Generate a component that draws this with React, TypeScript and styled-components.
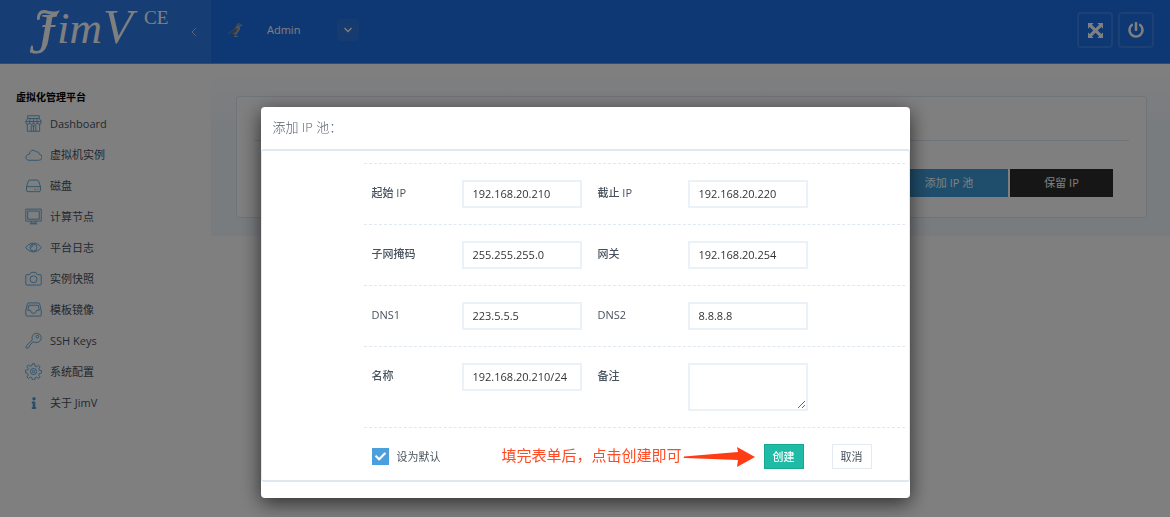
import React from "react";
import styled, { createGlobalStyle } from "styled-components";
import { FaCheck, FaInfo, FaPowerOff } from "react-icons/fa";

const GlobalStyle = createGlobalStyle`
  * { box-sizing: border-box; }
  body {
    margin: 0;
    background: #fff;
    color: #48525e;
    font: 11px/16px "Open Sans", "Noto Sans CJK SC", sans-serif;
  }
  button, input, textarea { font: inherit; }
`;

const Page = styled.div`
  min-height: 100vh;
`;

const Header = styled.header`
  display: flex;
  height: 64px;
  background: #1c70e6;
  border-bottom: 1px solid #6f96dc;
`;

const Brand = styled.div`
  display: flex;
  align-items: center;
  justify-content: space-between;
  width: 211px;
  padding-right: 14px;
  background: #2f7de8;
  color: #fff;
`;

const Logo = styled.svg`
  overflow: visible;
  fill: #fff;
  font-family: "Liberation Serif", serif;
  font-style: italic;
`;

const UserBar = styled.div`
  display: flex;
  flex: 1;
  align-items: center;
  padding: 0 16px 3px;
  color: #fff;
`;

const UserName = styled.span`
  width: 70px;
  margin-left: 24px;
`;

const MenuButton = styled.button`
  display: grid;
  place-items: center;
  width: 22px;
  height: 22px;
  padding: 0;
  border: 0;
  border-radius: 3px;
  background: #2b76e2;
  color: #fff;
`;

const Tools = styled.div`
  display: flex;
  gap: 5px;
  margin-left: auto;
`;

const ToolButton = styled.button`
  display: grid;
  place-items: center;
  width: 36px;
  height: 36px;
  padding: 0;
  border: 2px solid #3a80ea;
  border-radius: 4px;
  background: transparent;
  color: #fff;
`;

const Body = styled.div`
  display: flex;
`;

const Sidebar = styled.nav`
  width: 211px;
  padding: 25px 16px;
`;

const NavTitle = styled.h2`
  margin: 0 0 3px;
  color: #000;
  font-size: 10px;
  line-height: 16px;
  font-weight: 700;
`;

const NavLink = styled.a`
  display: flex;
  align-items: center;
  gap: 8px;
  height: 31px;
  padding-left: 9px;
  color: #48525e;
  text-decoration: none;
`;

const IconSlot = styled.span`
  display: grid;
  place-items: center;
  width: 17px;
  height: 17px;
  color: #4a9fd8;
`;

const Main = styled.main`
  flex: 1;
  height: 172px;
  padding: 32px 23px 18px 25px;
  background: linear-gradient(#fff, #f3f8fe 60px);
`;

const Panel = styled.section`
  height: 122px;
  padding: 0 17px;
  border: 1px solid #dfe8f1;
  border-radius: 3px;
  background: #fff;
`;

const PanelHead = styled.div`
  height: 44px;
  border-bottom: 1px solid #dfe8f1;
`;

const PanelActions = styled.div`
  display: flex;
  justify-content: flex-end;
  gap: 2px;
  padding: 28px 16px 0;
`;

const PanelButton = styled.button<{ $dark?: boolean }>`
  width: ${(p) => (p.$dark ? 103 : 118)}px;
  height: 28px;
  padding: 0;
  border: 0;
  background: ${(p) => (p.$dark ? "#2d2d2d" : "#3f9bd8")};
  color: #fff;
`;

const Backdrop = styled.div`
  position: fixed;
  inset: 0;
  padding: 107px 16px 0;
  overflow: auto;
  background: rgba(0, 0, 0, 0.5);
`;

const Dialog = styled.section`
  max-width: 649px;
  margin: 0 auto;
  padding-bottom: 16px;
  border-radius: 4px;
  background: #fff;
  box-shadow: 0 5px 20px rgba(0, 0, 0, 0.65);
`;

const DialogTitle = styled.h1`
  margin: 0;
  padding: 11px 12px 13px;
  color: #59626e;
  font-size: 13px;
  line-height: 18px;
  font-weight: 300;
`;

const Form = styled.form`
  padding: 12px 4px 11px 102px;
  border: 1px solid #dfe8f1;
  border-width: 2px 1px;
  border-radius: 3px;
`;

const Row = styled.div`
  display: grid;
  grid-template-columns: 2fr 3fr 2fr 5fr;
  padding: 16px 0;
  border-top: 1px dashed #dfe8f1;
`;

const Label = styled.label`
  padding: 5px 8px;
  color: #48525e;
  font-weight: 500;
`;

const Field = styled.div`
  display: flex;
  padding: 0 8px;
`;

const TextInput = styled.input`
  width: 120px;
  height: 28px;
  padding: 0 9px 1px;
  border: 2px solid #eaf1f8;
  background: #fff;
  color: #333;
`;

const TextArea = styled.textarea`
  width: 120px;
  height: 48px;
  padding: 4px 9px;
  border: 2px solid #eaf1f8;
  background: #fff;
`;

const Footer = styled.div`
  display: flex;
  align-items: center;
  padding: 16px 33px 0 8px;
  border-top: 1px dashed #dfe8f1;
`;

const CheckLabel = styled.label`
  position: relative;
  display: flex;
  align-items: center;
  gap: 8px;

  svg { position: absolute; left: 3px; color: #fff; pointer-events: none; }
`;

const CheckBox = styled.input`
  appearance: none;
  width: 17px;
  height: 17px;
  margin: 0;
  background: #4b9fdc;
`;

const Hint = styled.span`
  margin-left: auto;
  padding-bottom: 4px;
  color: #ff4a24;
  font-size: 15px;
  line-height: 20px;
`;

const Arrow = styled.svg`
  margin: 0 9px 0 1px;
`;

const FormButton = styled.button<{ $primary?: boolean }>`
  width: 40px;
  height: 25px;
  padding: 0;
  border: 1px solid ${(p) => (p.$primary ? "#14a98f" : "#e3eaf2")};
  background: ${(p) => (p.$primary ? "#1fbba6" : "#fff")};
  color: ${(p) => (p.$primary ? "#fff" : "#48525e")};
  font-weight: ${(p) => (p.$primary ? 500 : 400)};
  & + & { margin-left: 28px; }
`;

const icons: Record<string, React.ReactNode> = {
  store: <><path d="M3.500 1h15v3.500h-15zM3.500 4.500L1 8.500h20l-2.500-4M3 11.500V21h16v-9.500M8 21v-7h6v7M11 14v7M7 4.500L6 8.500M11 4.500v4M15 4.500l1 4" /><path d="M1 8.500v1a2.500 2.500 0 0 0 5 0 2.500 2.500 0 0 0 5 0 2.500 2.500 0 0 0 5 0 2.500 2.500 0 0 0 5 0v-1" /></>,
  cloud: <path d="M5 18.500h12.500a4 4 0 0 0 .8-8c.2-2.500-2.300-3.800-4-2.800-2.800-4.200-8.800-2-8.300 2.800-6 .3-6.500 7.500-1 8z" />,
  disk: <><path d="M2 12.500L4.500 5q.5-1 1.500-1h10q1 0 1.500 1l2.500 7.500V17q0 2-2 2H4q-2 0-2-2zM2 12.500h18M12 16h2M16 16h1.500" /></>,
  monitor: <><path d="M1 1.500h20v15.500H1zM3.500 4h15v10.500h-15zM8 17v2.500h6V17M6 20.500h10" /></>,
  eye: <><path d="M1 11c5-7.500 15-7.500 20 0-5 7.500-15 7.500-20 0z" /><circle cx="11" cy="11" r="4.500" /><path d="M8.500 11a2.500 2.500 0 0 1 2.500-2.500" /></>,
  camera: <><path d="M2.500 6H6l2-3h6l2 3h3.500q1.500 0 1.500 1.500V18q0 1.500-1.500 1.500h-17Q1 19.500 1 18V7.500Q1 6 2.500 6z" /><circle cx="11" cy="12" r="4.500" /></>,
  inbox: <><path d="M1 12.500L3 4q.3-1.500 2-1.500h12q1.700 0 2 1.500l2 8.500V18q0 1.500-1.500 1.500h-17Q1 19.500 1 18z" /><path d="M3.500 12L5 5.500h12l1.500 6.500H15q-.5 4-4 4t-4-4z" /></>,
  key: <><path d="M10.500 12.500L6 17.500l-1 2.500-2.500 1q-2-.5-1-2.500l8-8.500a6 6 0 1 1 4.500 3.500q-2 0-3.500-1z" /><circle cx="16" cy="6" r="1.800" /></>,
  gear: <><path d="M9.500 1h3l.5 3 2 .8 2.500-1.800 2 2-1.700 2.500.8 2 2.900.5v3l-3 .5-.8 2 1.800 2.500-2 2-2.500-1.700-2 .8-.5 2.900h-3l-.5-3-2-.8-2.500 1.800-2-2 1.700-2.500-.8-2L.5 12.500v-3l3-.5.8-2L2.500 4.500l2-2L7 4.200l2-.8z" /><circle cx="11" cy="11" r="4" /><circle cx="11" cy="11" r="1.500" /></>,
};

const NavIcon = ({ name }: { name: string }) => (
  <IconSlot>
    {name === "info" ? <FaInfo size={12} /> : (
      <svg width="17" height="17" viewBox="0 0 22 22" fill="none" stroke="currentColor" strokeWidth="1.100" aria-hidden="true">{icons[name]}</svg>
    )}
  </IconSlot>
);

const navItems = [
  ["store", "Dashboard"], ["cloud", "虚拟机实例"], ["disk", "磁盘"], ["monitor", "计算节点"],
  ["eye", "平台日志"], ["camera", "实例快照"], ["inbox", "模板镜像"], ["key", "SSH Keys"],
  ["gear", "系统配置"], ["info", "关于 JimV"],
];

const fields = [
  [["start", "起始 IP", "192.168.20.210"], ["end", "截止 IP", "192.168.20.220"]],
  [["mask", "子网掩码", "255.255.255.0"], ["gateway", "网关", "192.168.20.254"]],
  [["dns1", "DNS1", "223.5.5.5"], ["dns2", "DNS2", "8.8.8.8"]],
  [["name", "名称", "192.168.20.210/24"], ["note", "备注", ""]],
];

export default function App() {
  return (
    <>
      <GlobalStyle />
      <Page>
        <Header>
          <Brand>
            <Logo width="180" height="63" role="img" aria-label="JimV CE">
              <text x="29" y="53" fontSize="58">J</text>
              <path d="M37 19C37 12 41 9 47 10.500S56 12 60 10l-3 5c-4 1-7-.5-11-1.500-4-.8-6 1-6 4.500 0 2-3 3-3 1z" />
              <path d="M43 25h13l-1 2H42z" />
              <text x="57" y="43" fontSize="45">im</text>
              <text x="103" y="43" fontSize="49">V</text>
              <text x="144" y="24" fontSize="19" fontStyle="normal">CE</text>
            </Logo>
            <svg width="6" height="10" fill="none" stroke="#fff" opacity=".6"><path d="M5 1L1 5l4 4" /></svg>
          </Brand>
          <UserBar>
            <svg width="16" height="16" viewBox="0 0 16 16" aria-hidden="true">
              <path d="M0 12l5-3 4-4 1-3 2-1 1.500 1.500L16 3l-3 1.500v3L10 12l-1 .5V14h2v1H7v-1h1v-1.500L5 11z" fill="#9ea6ac" />
              <path d="M1 12l7-5 3-1-2 4-3 1.500z" fill="#5f707c" />
              <path d="M10 3l2-1 1.500 1-2 1z" fill="#6e7b84" />
            </svg>
            <UserName>Admin</UserName>
            <MenuButton aria-label="User menu"><svg width="10" height="8" fill="none" stroke="currentColor" strokeWidth="1.300"><path d="M1.500 2L5 5.500 8.500 2" /></svg></MenuButton>
            <Tools>
              <ToolButton aria-label="Full screen"><svg width="15" height="15" viewBox="0 0 16 16" fill="currentColor"><path d="M0 0h6L4.200 1.800 8 5.600l3.800-3.800L10 0h6v6l-1.800-1.800L10.400 8l3.800 3.800L16 10v6h-6l1.800-1.800L8 10.400l-3.800 3.800L6 16H0v-6l1.800 1.800L5.600 8 1.800 4.200 0 6z" /></svg></ToolButton>
              <ToolButton aria-label="Log out"><FaPowerOff size={16} /></ToolButton>
            </Tools>
          </UserBar>
        </Header>
        <Body>
          <Sidebar>
            <NavTitle>虚拟化管理平台</NavTitle>
            {navItems.map(([icon, text]) => (
              <NavLink href="#" key={icon}><NavIcon name={icon} />{text}</NavLink>
            ))}
          </Sidebar>
          <Main>
            <Panel>
              <PanelHead />
              <PanelActions>
                <PanelButton>添加 IP 池</PanelButton>
                <PanelButton $dark>保留 IP</PanelButton>
              </PanelActions>
            </Panel>
          </Main>
        </Body>
      </Page>
      <Backdrop>
        <Dialog role="dialog" aria-labelledby="dialog-title">
          <DialogTitle id="dialog-title">添加 IP 池：</DialogTitle>
          <Form>
            {fields.map((row) => (
              <Row key={row[0][0]}>
                {row.map(([id, label, value]) => (
                  <React.Fragment key={id}>
                    <Label htmlFor={id}>{label}</Label>
                    <Field>{id === "note" ? <TextArea id={id} /> : <TextInput id={id} defaultValue={value} />}</Field>
                  </React.Fragment>
                ))}
              </Row>
            ))}
            <Footer>
              <CheckLabel><CheckBox type="checkbox" defaultChecked /><FaCheck size={11} />设为默认</CheckLabel>
              <Hint>填完表单后，点击创建即可</Hint>
              <Arrow width="72" height="22" fill="#ff3d14" aria-hidden="true"><path d="M1 10.500Q0 12 2 12L55 14l-1 7 18-10L54 1l1 5z" /></Arrow>
              <FormButton type="button" $primary>创建</FormButton>
              <FormButton type="button">取消</FormButton>
            </Footer>
          </Form>
        </Dialog>
      </Backdrop>
    </>
  );
}
